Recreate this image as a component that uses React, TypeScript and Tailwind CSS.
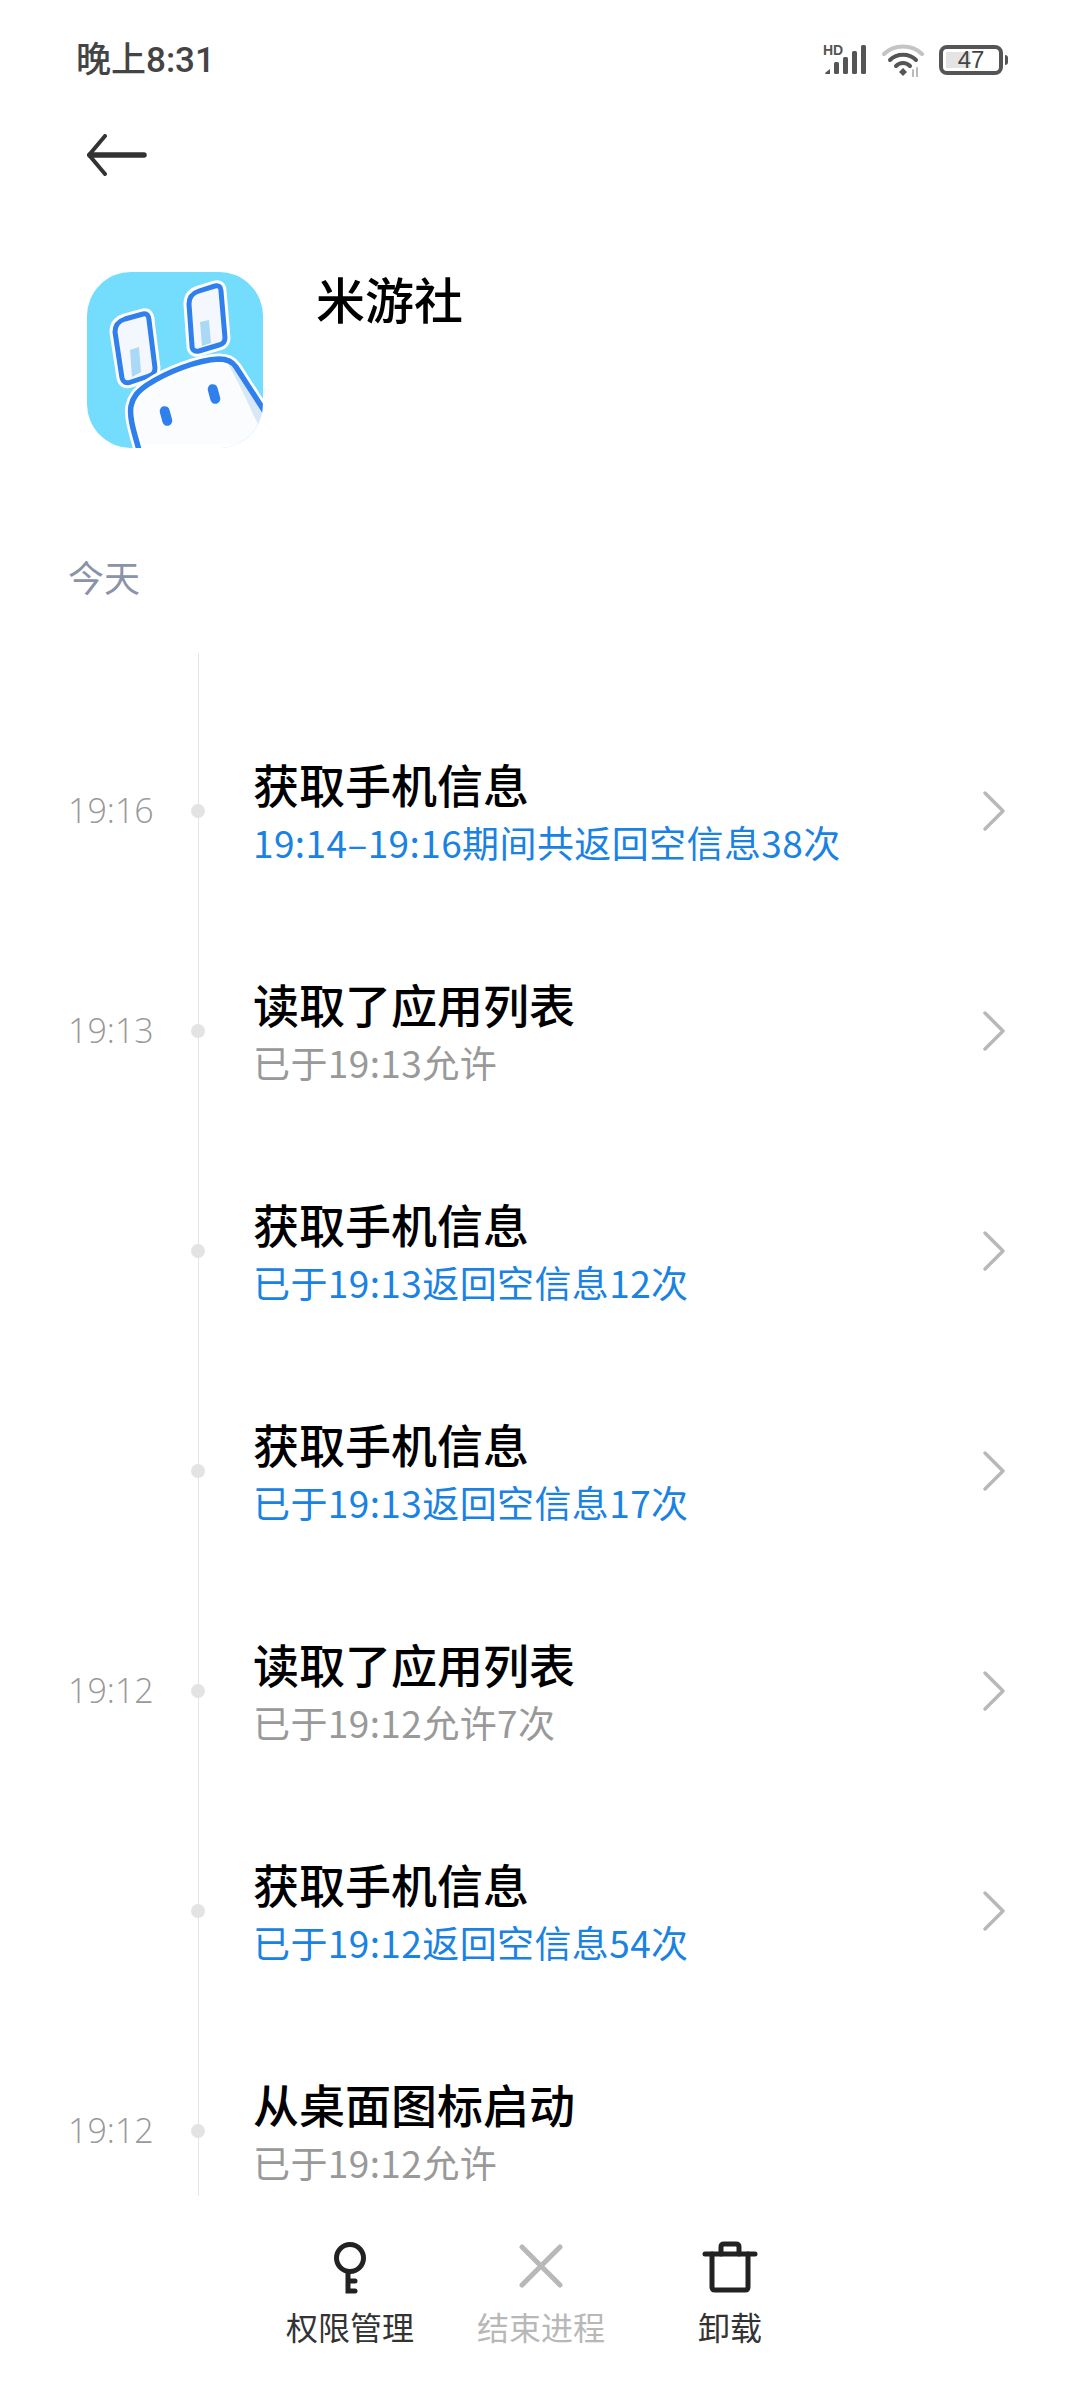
import React from "react";

const font = "font-['Noto_Sans_CJK_SC','Noto_Sans',sans-serif]";

interface RowProps {
  time?: string;
  title: string;
  sub: string;
  blue?: boolean;
  arrow?: boolean;
}

const rows: RowProps[] = [
  { time: "19:16", title: "获取手机信息", sub: "19:14–19:16期间共返回空信息38次", blue: true, arrow: true },
  { time: "19:13", title: "读取了应用列表", sub: "已于19:13允许", arrow: true },
  { title: "获取手机信息", sub: "已于19:13返回空信息12次", blue: true, arrow: true },
  { title: "获取手机信息", sub: "已于19:13返回空信息17次", blue: true, arrow: true },
  { time: "19:12", title: "读取了应用列表", sub: "已于19:12允许7次", arrow: true },
  { title: "获取手机信息", sub: "已于19:12返回空信息54次", blue: true, arrow: true },
  { time: "19:12", title: "从桌面图标启动", sub: "已于19:12允许" },
];

const Row = ({ time, title, sub, blue, arrow }: RowProps) => (
  <div className="flex h-[220px] shrink-0 items-stretch">
    <div className="flex w-[198px] items-center pb-[2px] pl-[68px] text-[34px] text-[#999999] font-['Open_Sans',sans-serif]">
      <span className="font-light leading-none">{time}</span>
    </div>
    <div className="relative w-px bg-[#e4e4e4]">
      <div className="absolute left-[-7px] top-[103px] h-[14px] w-[14px] rounded-full bg-[#e3e3e3]" />
    </div>
    <div className="flex flex-1 flex-col justify-center pl-[54px]">
      <div className="text-[46px] font-medium leading-[60px] text-black">{title}</div>
      <div className={`pt-[1px] text-[37px] leading-[56px] tracking-[0.4px] ${blue ? "text-[#1a82e2]" : "text-[#999999]"}`}>{sub}</div>
    </div>
    {arrow && (
      <div className="flex items-center pr-[74px]">
        <svg width="24" height="42" viewBox="0 0 24 42" fill="none" stroke="#b8b8b8" strokeWidth="3.5" strokeLinecap="round" strokeLinejoin="round">
          <path d="M3 3L21 21L3 39" />
        </svg>
      </div>
    )}
  </div>
);

const AppIcon = () => (
  <svg width="176" height="176" viewBox="0 0 176 176" className="rounded-[44px]">
    <rect width="176" height="176" fill="#74dcfd" />
    {/* left ear */}
    <path d="M28 60C28 52 32 49 38 47L56 42C60 41 62 44 62 48L68 96C68 100 66 103 62 104L44 110C39 112 36 110 35 106Z" fill="#f4f8fe" stroke="#ffffff" strokeWidth="11" strokeLinejoin="round" />
    <path d="M28 60C28 52 32 49 38 47L56 42C60 41 62 44 62 48L68 96C68 100 66 103 62 104L44 110C39 112 36 110 35 106Z" fill="#f4f8fe" stroke="#2f80ec" strokeWidth="5" strokeLinejoin="round" />
    <path d="M43 78L52 75L54 100L45 105Z" fill="#a9d9f5" />
    {/* right ear */}
    <path d="M102 32C102 24 106 21 112 19L128 14C132 13 134 15 134 19L138 66C138 70 136 72 132 73L112 79C108 80 105 78 105 74Z" fill="#f4f8fe" stroke="#ffffff" strokeWidth="11" strokeLinejoin="round" />
    <path d="M102 32C102 24 106 21 112 19L128 14C132 13 134 15 134 19L138 66C138 70 136 72 132 73L112 79C108 80 105 78 105 74Z" fill="#f4f8fe" stroke="#2f80ec" strokeWidth="5" strokeLinejoin="round" />
    <path d="M113 50L122 48L124 71L115 74Z" fill="#a9d9f5" />
    {/* head */}
    <path d="M52 178C47 160 42 145 44 134C46 125 50 120 60 113C80 100 110 88 132 87C140 87 145 89 149 95L178 140V178Z" fill="#fbfcfd" stroke="#ffffff" strokeWidth="11" strokeLinejoin="round" />
    <path d="M141 92C146 94 150 98 154 105L176 140V160C168 150 160 125 141 92Z" fill="#d8e8f8" />
    <path d="M52 178C47 160 42 145 44 134C46 125 50 120 60 113C80 100 110 88 132 87C140 87 145 89 149 95L178 140" fill="none" stroke="#2f80ec" strokeWidth="5.5" />
    <rect x="-5" y="-10" width="10" height="20" rx="5" fill="#2f80ec" transform="translate(127 122) rotate(-15)" />
    <rect x="-5" y="-10" width="10" height="20" rx="5" fill="#2f80ec" transform="translate(79 144) rotate(-15)" />
  </svg>
);

export default function App() {
  return (
    <div className={`flex h-[2400px] w-[1080px] flex-col overflow-hidden bg-white ${font}`}>
      {/* status bar */}
      <div className="flex h-[120px] shrink-0 items-center justify-between pl-[76px] pr-[72px]">
        <span className="text-[35px] font-medium leading-none text-[#444444] font-['Roboto','Noto_Sans_CJK_SC',sans-serif]">晚上8:31</span>
        <div className="flex items-center gap-[15px]">
          <svg width="44" height="34" viewBox="0 0 44 34">
            <text x="0" y="12" fontSize="14" fontWeight="700" fill="#555" fontFamily="Liberation Sans">HD</text>
            <path d="M2 30L7 26V31H3C2 31 2 30 2 30Z" fill="#555" />
            <rect x="11" y="19" width="5" height="12" rx="1.5" fill="#555" />
            <rect x="20" y="14" width="5" height="17" rx="1.5" fill="#555" />
            <rect x="29" y="8" width="5" height="23" rx="1.5" fill="#555" />
            <rect x="38" y="2" width="5" height="29" rx="1.5" fill="#555" />
          </svg>
          <svg width="42" height="34" viewBox="0 0 42 34" fill="none" strokeLinecap="round">
            <path d="M2 11C12 1 30 1 40 11" stroke="#c4c4c4" strokeWidth="4" />
            <path d="M8 17C15 10 27 10 34 17" stroke="#555" strokeWidth="4" />
            <path d="M14 23C18 19 24 19 28 23" stroke="#555" strokeWidth="4" />
            <path d="M21 25L25 29L21 33L17 29Z" fill="#555" />
            <path d="M31 27V34M35 25V34" stroke="#bbb" strokeWidth="2" />
          </svg>
          <div className="flex items-center gap-[2px]">
            <div className="relative flex h-[30px] w-[64px] items-center justify-center rounded-[8px] border-[4px] border-[#555555] text-[24px] leading-none text-[#444444] font-['Liberation_Sans',sans-serif]">
              <div className="absolute bottom-[3px] left-[3px] top-[3px] w-[24px] bg-[#e4e4e4]" />
              <span className="relative">47</span>
            </div>
            <div className="h-[10px] w-[3px] rounded-r-full bg-[#555555]" />
          </div>
        </div>
      </div>

      {/* back */}
      <div className="flex h-[70px] shrink-0 items-center pl-[85px]">
        <svg width="62" height="42" viewBox="0 0 62 42" fill="none" stroke="#333333" strokeLinecap="round" strokeLinejoin="round">
          <path d="M5 21H59" strokeWidth="5.5" />
          <path d="M20 2L4 21L20 40" strokeWidth="4" />
        </svg>
      </div>

      {/* app header */}
      <div className="mt-[82px] flex h-[176px] shrink-0 pl-[87px]">
        <AppIcon />
        <div className="ml-[53px] mt-[-4px] text-[49px] font-medium leading-[60px] text-black">米游社</div>
      </div>

      <div className="mt-[103px] pl-[68px] text-[36px] leading-[50px] text-[#8a93a8]">今天</div>

      {/* timeline */}
      <div className="mt-[52px] flex h-[1543px] shrink-0 flex-col overflow-hidden">
        <div className="ml-[198px] h-[48px] w-px shrink-0 bg-[#e4e4e4]" />
        {rows.map((r, i) => (
          <Row key={i} {...r} />
        ))}
      </div>

      {/* bottom actions */}
      <div className="flex pl-[286px] pt-[45px]">
        <div className="flex w-[128px] flex-col items-center">
          <svg width="36" height="54" viewBox="0 0 36 54" fill="none" stroke="#222222" strokeWidth="5" strokeLinecap="round">
            <circle cx="18" cy="17" r="13.5" />
            <path d="M16 31V50H23M16 40H23" />
          </svg>
          <span className="mt-[9px] whitespace-nowrap text-[32px] leading-[44px] text-[#333333]">权限管理</span>
        </div>
        <div className="ml-[63px] flex w-[128px] flex-col items-center">
          <svg width="46" height="54" viewBox="0 0 46 54" fill="none" stroke="#b8b8b8" strokeWidth="5" strokeLinecap="round">
            <path d="M4 6L42 44M42 6L4 44" />
          </svg>
          <span className="mt-[9px] whitespace-nowrap text-[32px] leading-[44px] text-[#b8b8b8]">结束进程</span>
        </div>
        <div className="ml-[93px] flex flex-col items-center">
          <svg width="56" height="54" viewBox="0 0 56 54" fill="none" stroke="#222222" strokeWidth="5" strokeLinecap="round" strokeLinejoin="round">
            <path d="M3 13H53" />
            <path d="M10 13V46C10 48 11 49 13 49H43C45 49 46 48 46 46V13" />
            <path d="M19 13V6C19 4 20 3 22 3H34C36 3 37 4 37 6V13" />
          </svg>
          <span className="mt-[9px] whitespace-nowrap text-[32px] leading-[44px] text-[#333333]">卸载</span>
        </div>
      </div>
    </div>
  );
}
